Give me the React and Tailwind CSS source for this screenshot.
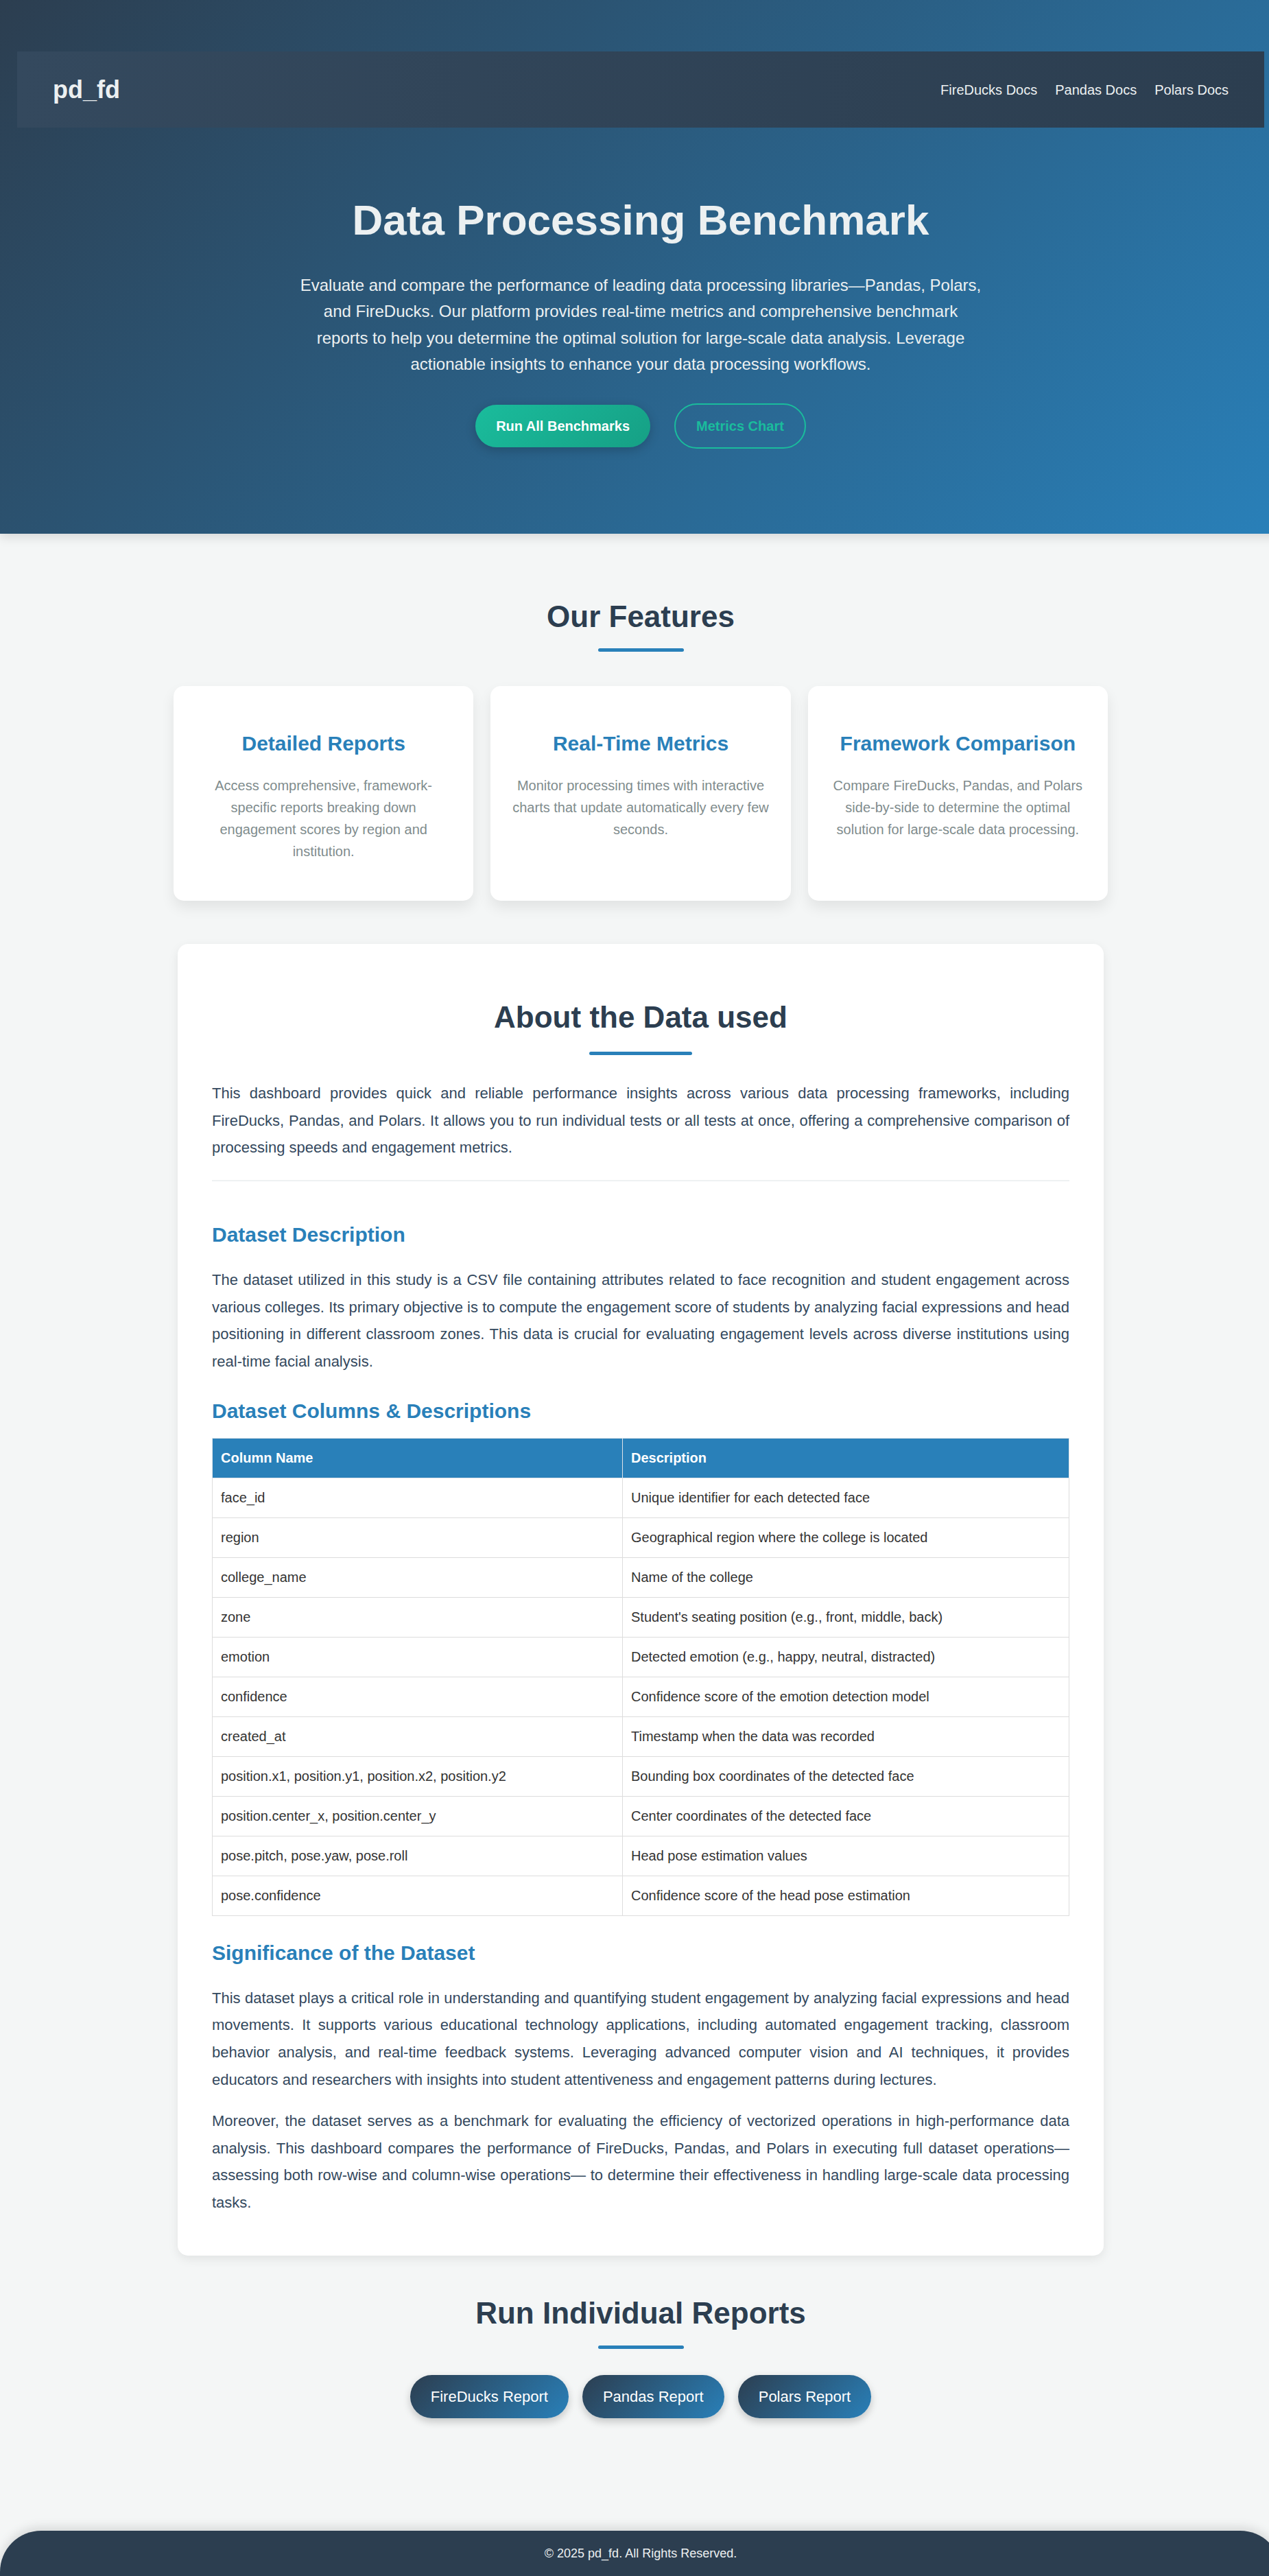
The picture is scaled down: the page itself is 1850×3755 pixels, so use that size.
import React from "react";

const columns = [
    ["face_id", "Unique identifier for each detected face"],
    ["region", "Geographical region where the college is located"],
    ["college_name", "Name of the college"],
    ["zone", "Student's seating position (e.g., front, middle, back)"],
    ["emotion", "Detected emotion (e.g., happy, neutral, distracted)"],
    ["confidence", "Confidence score of the emotion detection model"],
    ["created_at", "Timestamp when the data was recorded"],
    ["position.x1, position.y1, position.x2, position.y2", "Bounding box coordinates of the detected face"],
    ["position.center_x, position.center_y", "Center coordinates of the detected face"],
    ["pose.pitch, pose.yaw, pose.roll", "Head pose estimation values"],
    ["pose.confidence", "Confidence score of the head pose estimation"],
];

const features = [
    {
        title: "Detailed Reports",
        text: "Access comprehensive, framework-specific reports breaking down engagement scores by region and institution.",
    },
    {
        title: "Real-Time Metrics",
        text: "Monitor processing times with interactive charts that update automatically every few seconds.",
    },
    {
        title: "Framework Comparison",
        text: "Compare FireDucks, Pandas, and Polars side-by-side to determine the optimal solution for large-scale data processing.",
    },
];

function SectionTitle({ children, lineWidth = "w-[125px]", gap = "mt-5" }) {
    return (
        <div className="flex flex-col items-center">
            <h2 className="text-[44px] leading-[1.2] font-bold text-[#2c3e50]">{children}</h2>
            <div className={`${gap} ${lineWidth} h-[5px] rounded-full bg-[#2980b9]`} />
        </div>
    );
}

export default function App() {
    return (
        <div className="w-full overflow-hidden bg-[#f4f6f6] font-['Liberation_Sans',Arial,sans-serif]">
            <div className="w-[1868px]">
                {/* Hero */}
                <header className="pt-[75px] pb-[124px] bg-[linear-gradient(135deg,#2c3e50,#2980b9)] shadow-[0_5px_15px_rgba(0,0,0,0.12)]">
                    <nav className="mx-[25px] h-[111px] px-[52px] flex items-center justify-between bg-[linear-gradient(90deg,#34495e,#2c3e50)]">
                        <span className="text-[36px] font-bold text-[#ecf0f1] leading-none">pd_fd</span>
                        <div className="flex gap-[26px] text-[20px] text-[#ecf0f1]">
                            <a href="#">FireDucks Docs</a>
                            <a href="#">Pandas Docs</a>
                            <a href="#">Polars Docs</a>
                        </div>
                    </nav>
                    <h1 className="mt-[98px] text-center text-[62px] leading-[1.2] font-bold text-[#ecf0f1]">
                        Data Processing Benchmark
                    </h1>
                    <p className="mt-[38.6px] mx-auto max-w-[1000px] text-center text-[24px] leading-[38.4px] text-[#ecf0f1]">
                        Evaluate and compare the performance of leading data processing libraries—Pandas, Polars, and FireDucks. Our platform provides real-time metrics and comprehensive benchmark reports to help you determine the optimal solution for large-scale data analysis. Leverage actionable insights to enhance your data processing workflows.
                    </p>
                    <div className="mt-[37px] flex items-center justify-center gap-[35px]">
                        <button className="h-[62px] px-[30px] rounded-full text-[20px] font-bold text-white bg-[linear-gradient(135deg,#1abc9c,#16a085)] shadow-[0_4px_15px_rgba(0,0,0,0.2)]">
                            Run All Benchmarks
                        </button>
                        <button className="h-[66px] px-[30px] rounded-full border-2 border-[#1abc9c] text-[20px] font-bold text-[#1abc9c]">
                            Metrics Chart
                        </button>
                    </div>
                </header>

                {/* Features */}
                <section className="pt-[95px]">
                    <SectionTitle>Our Features</SectionTitle>
                    <div className="mt-[50px] mx-auto w-[1362px] grid grid-cols-3 gap-[25px]">
                        {features.map((f) => (
                            <div key={f.title} className="bg-white rounded-[15px] px-[30px] pt-[66px] pb-[56px] text-center shadow-[0_10px_20px_rgba(0,0,0,0.08)]">
                                <h3 className="text-[30px] leading-[36px] font-bold text-[#2980b9]">{f.title}</h3>
                                <p className="mt-[27px] text-[20px] leading-[32px] text-[#7f8c8d]">{f.text}</p>
                            </div>
                        ))}
                    </div>
                </section>

                {/* About the data */}
                <section className="mt-[63px] mx-auto w-[1350px] bg-white rounded-[15px] px-[50px] pt-[81px] pb-[57px] shadow-[0_5px_15px_rgba(0,0,0,0.08)]">
                    <SectionTitle lineWidth="w-[150px]" gap="mt-[23px]">About the Data used</SectionTitle>
                    <p className="mt-[36px] text-[22px] leading-[39.6px] text-justify text-[#34495e]">
                        This dashboard provides quick and reliable performance insights across various data processing frameworks, including FireDucks, Pandas, and Polars. It allows you to run individual tests or all tests at once, offering a comprehensive comparison of processing speeds and engagement metrics.
                    </p>
                    <hr className="mt-[27px] border-0 border-t-2 border-[#eef1f2]" />

                    <h3 className="mt-[60px] text-[30px] leading-[36px] font-bold text-[#2980b9]">Dataset Description</h3>
                    <p className="mt-[28px] text-[22px] leading-[39.6px] text-justify text-[#34495e]">
                        The dataset utilized in this study is a CSV file containing attributes related to face recognition and student engagement across various colleges. Its primary objective is to compute the engagement score of students by analyzing facial expressions and head positioning in different classroom zones. This data is crucial for evaluating engagement levels across diverse institutions using real-time facial analysis.
                    </p>

                    <h3 className="mt-[35px] text-[30px] leading-[36px] font-bold text-[#2980b9]">Dataset Columns &amp; Descriptions</h3>
                    <table className="mt-[20.5px] w-full border-collapse text-left text-[20px] leading-[33px]">
                        <thead>
                            <tr className="bg-[#2980b9] text-white">
                                <th className="w-[598px] px-3 py-3 font-bold border border-[#dde3e8]">Column Name</th>
                                <th className="px-3 py-3 font-bold border border-[#dde3e8]">Description</th>
                            </tr>
                        </thead>
                        <tbody>
                            {columns.map(([name, desc]) => (
                                <tr key={name} className="bg-white text-[#333333]">
                                    <td className="px-3 py-3 border border-[#dddddd]">{name}</td>
                                    <td className="px-3 py-3 border border-[#dddddd]">{desc}</td>
                                </tr>
                            ))}
                        </tbody>
                    </table>

                    <h3 className="mt-[36px] text-[30px] leading-[36px] font-bold text-[#2980b9]">Significance of the Dataset</h3>
                    <p className="mt-[28px] text-[22px] leading-[39.6px] text-justify text-[#34495e]">
                        This dataset plays a critical role in understanding and quantifying student engagement by analyzing facial expressions and head movements. It supports various educational technology applications, including automated engagement tracking, classroom behavior analysis, and real-time feedback systems. Leveraging advanced computer vision and AI techniques, it provides educators and researchers with insights into student attentiveness and engagement patterns during lectures.
                    </p>
                    <p className="mt-[21px] text-[22px] leading-[39.6px] text-justify text-[#34495e]">
                        Moreover, the dataset serves as a benchmark for evaluating the efficiency of vectorized operations in high-performance data analysis. This dashboard compares the performance of FireDucks, Pandas, and Polars in executing full dataset operations—assessing both row-wise and column-wise operations— to determine their effectiveness in handling large-scale data processing tasks.
                    </p>
                </section>

                {/* Individual reports */}
                <section className="mt-[58.6px]">
                    <SectionTitle>Run Individual Reports</SectionTitle>
                    <div className="mt-[38px] flex justify-center gap-5">
                        {["FireDucks Report", "Pandas Report", "Polars Report"].map((label) => (
                            <button key={label} className="h-[63px] px-[30px] rounded-full text-[22px] text-white bg-[linear-gradient(135deg,#2c3e50,#2980b9)] shadow-[0_5px_12px_rgba(0,0,0,0.2)]">
                                {label}
                            </button>
                        ))}
                    </div>
                </section>

                <footer className="mt-[164px] h-[66px] flex items-center justify-center rounded-t-[60px] bg-[#2c3e50] text-[18px] text-[#ecf0f1] shadow-[0_-5px_15px_rgba(0,0,0,0.12)]">
                    © 2025 pd_fd. All Rights Reserved.
                </footer>
            </div>
        </div>
    );
}
